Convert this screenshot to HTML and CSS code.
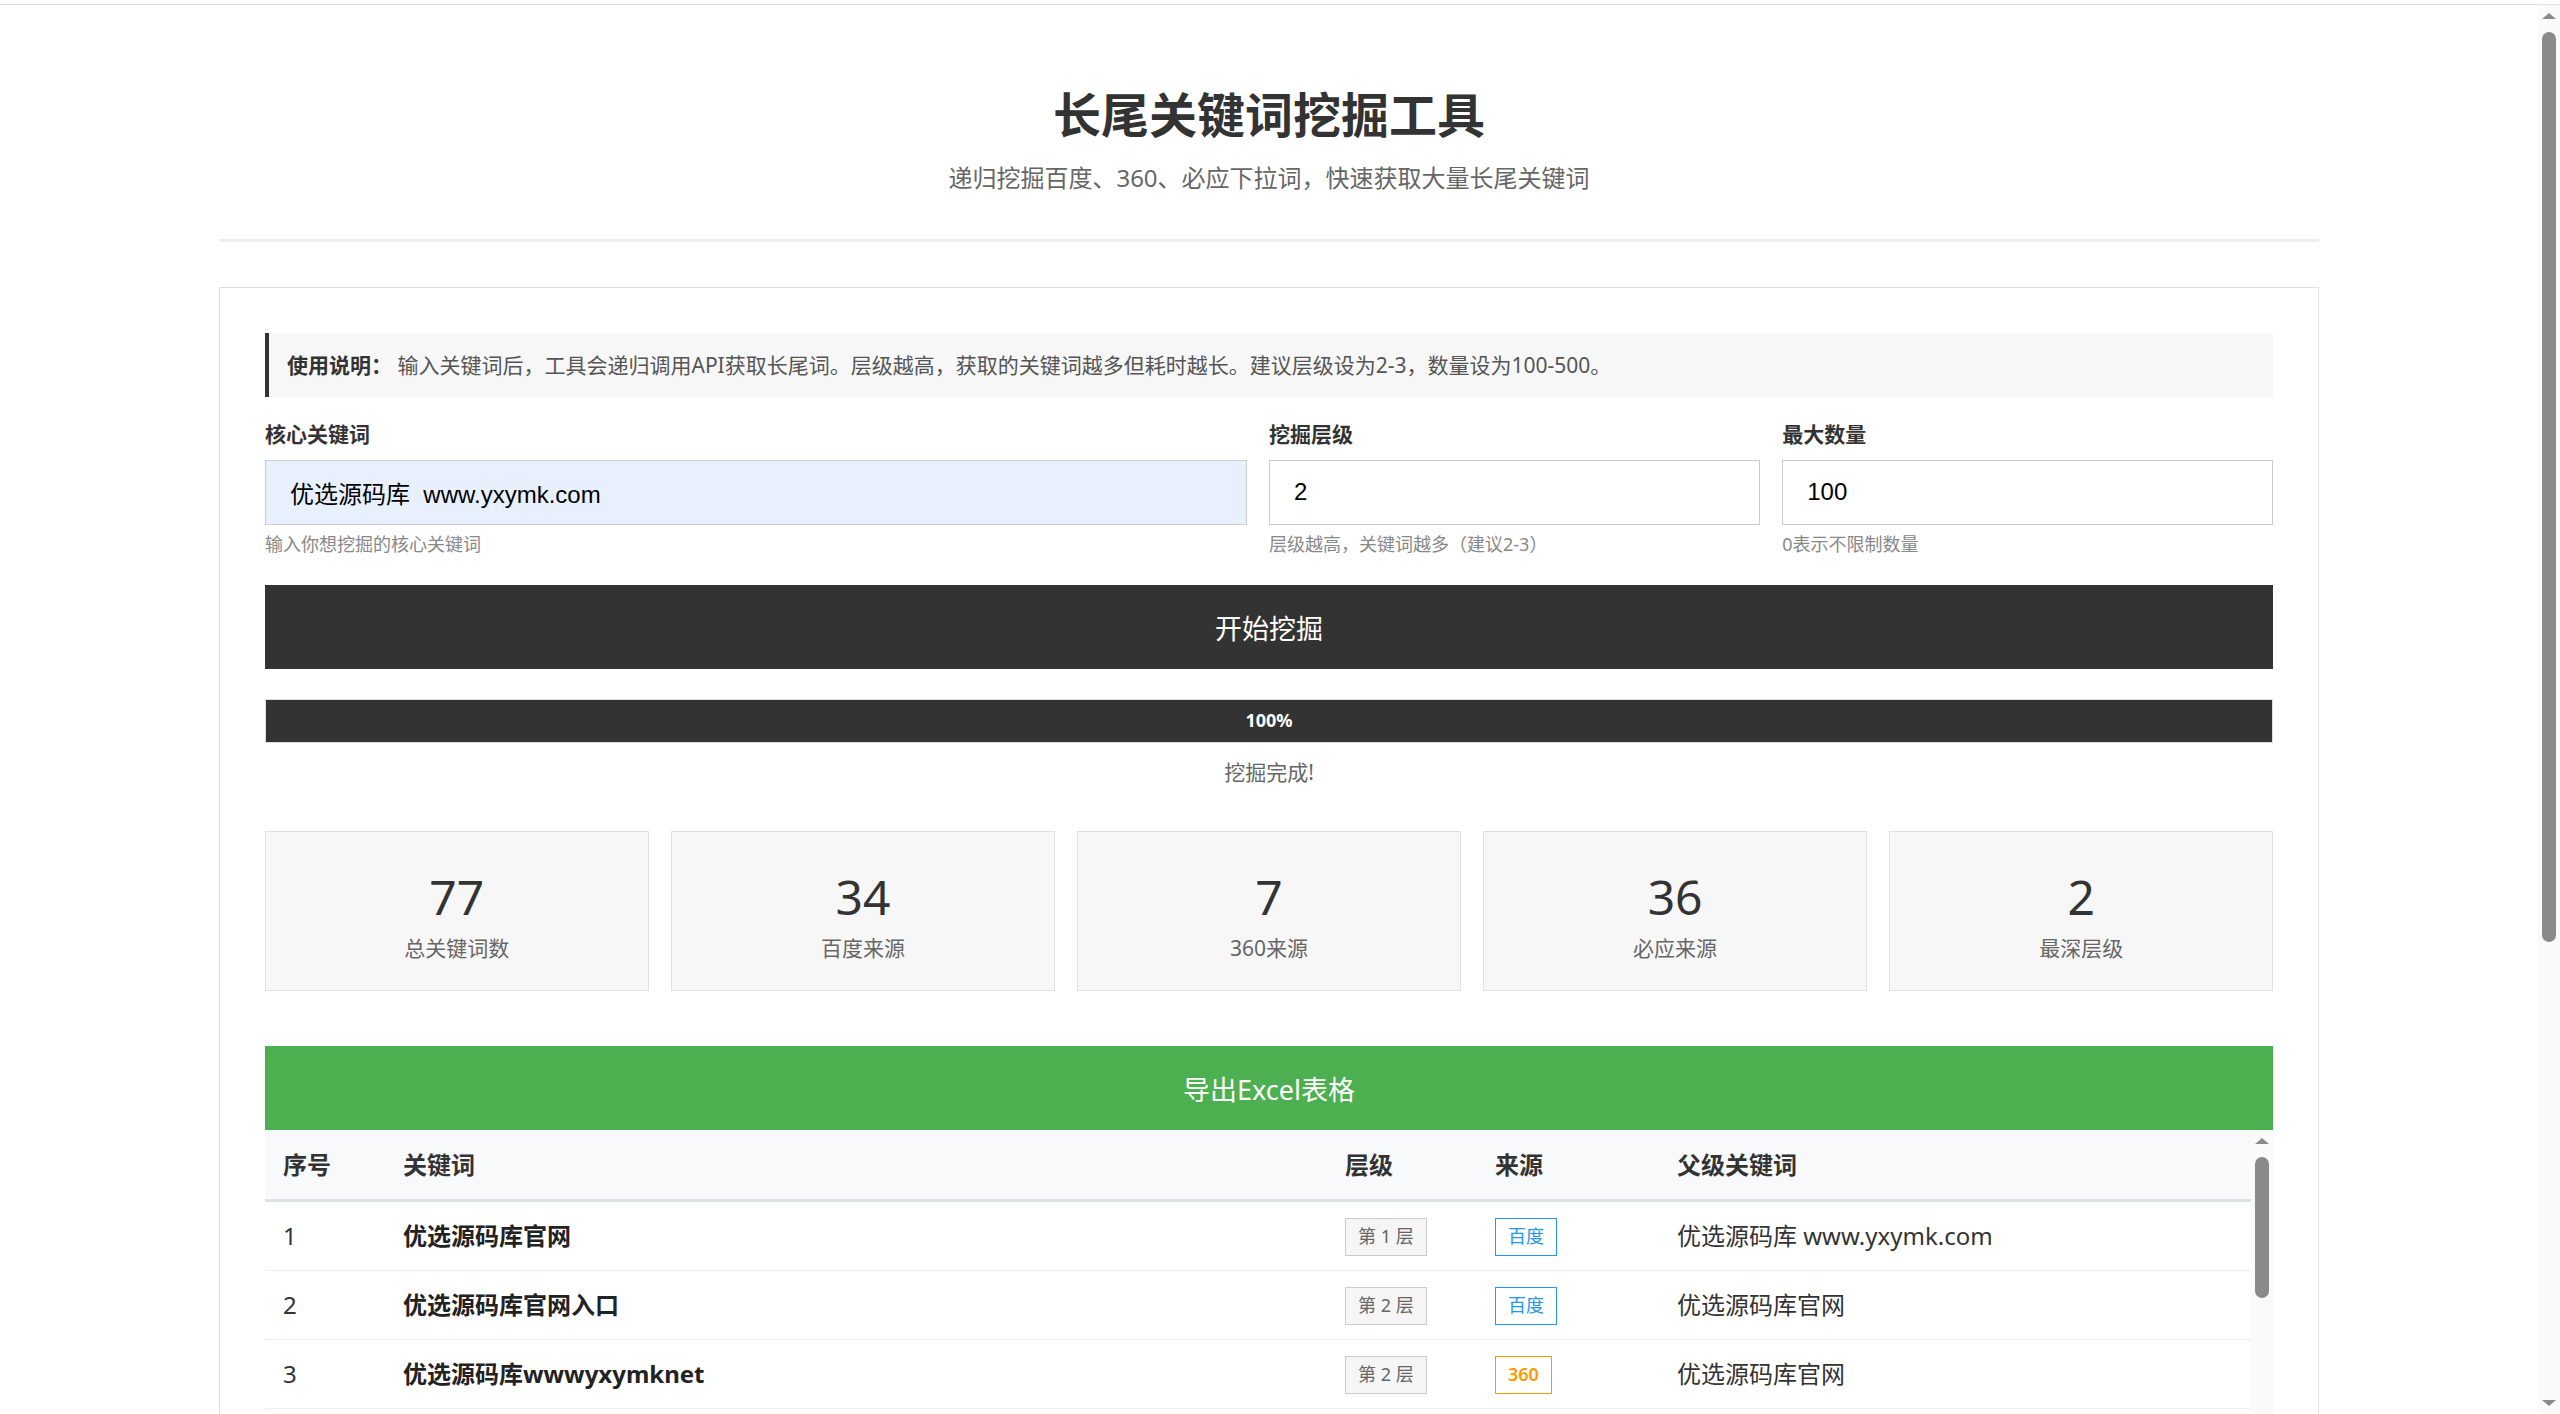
FILE: index.html
```html
<!DOCTYPE html>
<html lang="zh-CN">
<head>
    <meta charset="UTF-8">
    <meta name="viewport" content="width=device-width, initial-scale=1.0">
    <title>长尾关键词挖掘工具</title>
    <link rel="stylesheet" href="styles.css">
</head>
<body>
    <div class="window">
        <div class="viewport">
            <div class="container">
                <header class="header">
                    <h1>长尾关键词挖掘工具</h1>
                    <p class="subtitle">递归挖掘百度、360、必应下拉词，快速获取大量长尾关键词</p>
                </header>

                <main class="card">
                    <div class="notice">
                        <strong>使用说明：</strong> 输入关键词后，工具会递归调用API获取长尾词。层级越高，获取的关键词越多但耗时越长。建议层级设为2-3，数量设为100-500。
                    </div>

                    <div class="form-row">
                        <div class="form-group">
                            <label for="keyword">核心关键词</label>
                            <input class="filled" id="keyword" type="text" value="优选源码库  www.yxymk.com">
                            <small>输入你想挖掘的核心关键词</small>
                        </div>
                        <div class="form-group">
                            <label for="depth">挖掘层级</label>
                            <input id="depth" type="number" value="2">
                            <small>层级越高，关键词越多（建议2-3）</small>
                        </div>
                        <div class="form-group">
                            <label for="limit">最大数量</label>
                            <input id="limit" type="number" value="100">
                            <small>0表示不限制数量</small>
                        </div>
                    </div>

                    <button class="btn btn-start">开始挖掘</button>

                    <div class="progress">
                        <div class="progress-bar" style="width: 100%">100%</div>
                    </div>
                    <p class="status">挖掘完成!</p>

                    <div class="stats">
                        <div class="stat">
                            <div class="stat-num">77</div>
                            <div class="stat-label">总关键词数</div>
                        </div>
                        <div class="stat">
                            <div class="stat-num">34</div>
                            <div class="stat-label">百度来源</div>
                        </div>
                        <div class="stat">
                            <div class="stat-num">7</div>
                            <div class="stat-label">360来源</div>
                        </div>
                        <div class="stat">
                            <div class="stat-num">36</div>
                            <div class="stat-label">必应来源</div>
                        </div>
                        <div class="stat">
                            <div class="stat-num">2</div>
                            <div class="stat-label">最深层级</div>
                        </div>
                    </div>

                    <button class="btn btn-export">导出Excel表格</button>

                    <div class="table-wrap">
                        <div class="table-scroll">
                            <table>
                                <thead>
                                    <tr>
                                        <th class="col-no">序号</th>
                                        <th>关键词</th>
                                        <th class="col-level">层级</th>
                                        <th class="col-source">来源</th>
                                        <th class="col-parent">父级关键词</th>
                                    </tr>
                                </thead>
                                <tbody>
                                    <tr>
                                        <td>1</td>
                                        <td class="kw">优选源码库官网</td>
                                        <td><span class="tag tag-level">第 1 层</span></td>
                                        <td><span class="tag tag-baidu">百度</span></td>
                                        <td>优选源码库 www.yxymk.com</td>
                                    </tr>
                                    <tr>
                                        <td>2</td>
                                        <td class="kw">优选源码库官网入口</td>
                                        <td><span class="tag tag-level">第 2 层</span></td>
                                        <td><span class="tag tag-baidu">百度</span></td>
                                        <td>优选源码库官网</td>
                                    </tr>
                                    <tr>
                                        <td>3</td>
                                        <td class="kw">优选源码库wwwyxymknet</td>
                                        <td><span class="tag tag-level">第 2 层</span></td>
                                        <td><span class="tag tag-360">360</span></td>
                                        <td>优选源码库官网</td>
                                    </tr>
                                </tbody>
                            </table>
                        </div>
                        <div class="scrollbar table-bar">
                            <span class="sb-arrow sb-up"></span>
                            <div class="sb-track"><span class="sb-thumb"></span></div>
                            <span class="sb-arrow sb-down"></span>
                        </div>
                    </div>
                </main>
            </div>
        </div>

        <div class="scrollbar page-bar">
            <span class="sb-arrow sb-up"></span>
            <div class="sb-track"><span class="sb-thumb"></span></div>
            <span class="sb-arrow sb-down"></span>
        </div>
    </div>
</body>
</html>
```

FILE: styles.css
```css
*{
    margin: 0;
    padding: 0;
    box-sizing: border-box;
}
body{
    padding-top: 4px;
    font-family: "Noto Sans", "Noto Sans CJK SC", sans-serif;
    color: #333;
    background: #fff;
}
.window{
    display: flex;
    height: calc(100vh - 4px);
    border-top: 1.5px solid #e2e2e2;
    overflow: hidden;
}
.viewport{
    flex: 1;
    min-width: 0;
    overflow: hidden;
}

/* scrollbars */
.scrollbar{
    width: 22px;
    flex-shrink: 0;
    display: flex;
    flex-direction: column;
    background: #fafafa;
}
.sb-arrow{
    height: 22px;
    display: flex;
    align-items: center;
    justify-content: center;
}
.sb-up::before,
.sb-down::before{
    content: "";
    border-left: 7px solid transparent;
    border-right: 7px solid transparent;
}
.sb-up::before{ border-bottom: 6px solid #8a8a8a; }
.sb-down::before{ border-top: 6px solid #8a8a8a; }
.sb-track{
    flex: 1;
    padding: 4.5px 4px;
}
.sb-thumb{
    display: block;
    background: #8a8a8a;
    border-radius: 7px;
}
.page-bar .sb-thumb{ height: 910px; }
.table-bar .sb-track{ padding-top: 5px; }
.table-bar .sb-thumb{ height: 141px; }

.container{
    max-width: 2100px;
    margin: 0 auto;
    padding-bottom: 45px;
}

.header{
    text-align: center;
    padding: 77px 0 41.5px;
    border-bottom: 3px solid #eee;
    margin-bottom: 45px;
}
.header h1{
    font-size: 48px;
    line-height: 65px;
    margin-bottom: 11px;
    color: #333;
}
.subtitle{
    font-size: 24px;
    line-height: 39px;
    color: #666;
}

.card{
    border: 1.5px solid #e0e0e0;
    padding: 45px;
    background: #fff;
}

.notice{
    background: #f7f7f7;
    border-left: 4.5px solid #333;
    padding: 18px;
    font-size: 21px;
    line-height: 28px;
    color: #555;
    margin-bottom: 22.5px;
}
.notice strong{ color: #333; }

.form-row{
    display: grid;
    grid-template-columns: 2fr 1fr 1fr;
    gap: 22.5px;
    margin-bottom: 27.5px;
}
.form-group label{
    display: block;
    font-size: 21px;
    line-height: 31.5px;
    font-weight: 700;
    margin-bottom: 9px;
}
.form-group input{
    display: block;
    width: 100%;
    height: 65px;
    border: 1.5px solid #ccc;
    padding: 0 24px;
    font: 24px "Liberation Sans", "Noto Sans CJK SC", sans-serif;
    color: #000;
    background: #fff;
    outline: none;
}
.form-group input.filled{ background: #e8f0fe; }
.form-group small{
    display: block;
    margin-top: 6px;
    font-size: 18px;
    line-height: 27px;
    color: #888;
}

.btn{
    display: block;
    width: 100%;
    height: 84px;
    border: none;
    color: #fff;
    font-family: inherit;
    font-size: 27px;
    cursor: pointer;
}
.btn-start{ background: #333; }
.btn-export{
    background: #4caf50;
    margin-top: 55.5px;
}

.progress{
    margin-top: 30px;
    height: 44px;
    border: 1.5px solid #ddd;
    background: #f0f0f0;
}
.progress-bar{
    height: 100%;
    background: #333;
    color: #fff;
    font-size: 18px;
    font-weight: 700;
    line-height: 41px;
    text-align: center;
}
.status{
    margin-top: 13.5px;
    text-align: center;
    font-size: 21px;
    line-height: 31.5px;
    color: #666;
}

.stats{
    margin-top: 42.5px;
    display: grid;
    grid-template-columns: repeat(5, 1fr);
    gap: 22.5px;
}
.stat{
    height: 160px;
    background: #f7f7f7;
    border: 1.5px solid #e0e0e0;
    text-align: center;
    padding-top: 31.5px;
}
.stat-num{
    font-size: 48px;
    line-height: 67px;
    color: #333;
}
.stat-label{
    margin-top: 3px;
    font-size: 21px;
    line-height: 31.5px;
    color: #666;
}

.table-wrap{
    display: flex;
    height: 900px;
}
.table-scroll{
    flex: 1;
    min-width: 0;
    overflow: hidden;
}
table{
    width: 100%;
    border-collapse: collapse;
    font-size: 24px;
}
th{
    background: #f8f9fa;
    text-align: left;
    padding: 16.5px 18px;
    line-height: 36px;
    font-weight: 700;
    border-bottom: 3px solid #dee2e6;
}
td{
    padding: 14.25px 18px;
    line-height: 36px;
    border-bottom: 1.5px solid #eee;
}
.col-no{ width: 120px; }
.col-level{ width: 150px; }
.col-source{ width: 182px; }
.col-parent{ width: 592px; }
.kw{
    font-weight: 700;
    color: #222;
}

.tag{
    display: inline-block;
    vertical-align: middle;
    font-size: 18px;
    line-height: 27px;
    padding: 4.5px 12px;
    border: 1.5px solid;
    background: #fff;
}
.tag-level{
    background: #f5f5f5;
    border-color: #ccc;
    color: #666;
}
.tag-baidu{ color: #2196f3; border-color: #2196f3; }
.tag-360{ color: #ff9800; border-color: #ff9800; font-weight: 600; }
```
